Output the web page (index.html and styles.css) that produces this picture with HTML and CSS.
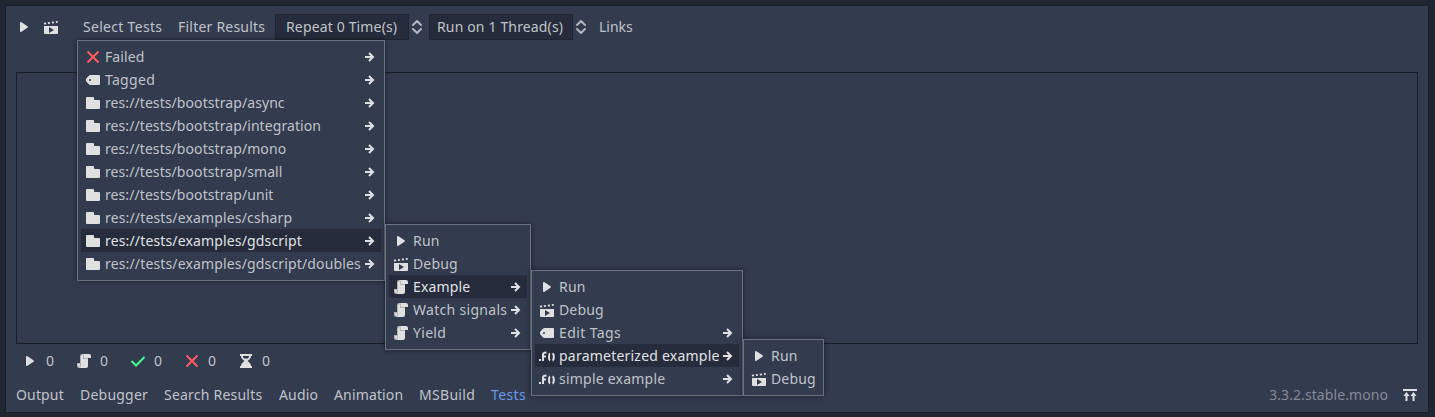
FILE: index.html
```html
<!DOCTYPE html>
<html lang="en">
<head>
<meta charset="utf-8">
<title>Tests</title>
<link rel="stylesheet" href="styles.css">
</head>
<body>
<svg class="defs" aria-hidden="true">
  <symbol id="play" viewBox="0 0 16 16"><path d="M4 4v8a1 1 0 0 0 1.500.8l6-4a1 1 0 0 0 0-1.600l-6-4A1 1 0 0 0 4 4z"/></symbol>
  <symbol id="clap" viewBox="0 0 16 16"><path fill-rule="evenodd" d="M1 7h14v7q0 1-1 1H2q-1 0-1-1zM6 8v6l5-3z"/><path d="M.8 3.700l2-.3.6 1.800-2.400.4zM4.600 3.200l2-.3.6 1.800-2 .3zM8.600 2.700l2-.3.6 1.800-2 .3zM12.600 2.200l2.200-.3v1.800l-1.600.3z"/></symbol>
  <symbol id="script" viewBox="0 0 16 16"><path d="M6 1v1a1 1 0 0 0-1 1v10H4v-2H2v2a1 1 0 0 0 1 1v1h7a2 2 0 0 0 2-2V5h3V3a2 2 0 0 0-2-2z"/><path fill="#b4b4b4" d="M6 1a2 2 0 0 0-2 2v7H1v3a2 2 0 0 0 4 0V3a1 1 0 0 1 2 0v3h5V5H8V3a2 2 0 0 0-2-2zM2 11h2v2a1 1 0 0 1-2 0z"/></symbol>
  <symbol id="folder" viewBox="0 0 16 16"><path d="M2 2a1 1 0 0 0-1 1v10a1 1 0 0 0 1 1h12a1 1 0 0 0 1-1V6a1 1 0 0 0-1-1h-4a1 1 0 0 1-1-1V3a1 1 0 0 0-1-1z"/></symbol>
  <symbol id="tag" viewBox="0 0 16 16"><path fill-rule="evenodd" d="M5.500 3H14q1 0 1 1v8q0 1-1 1H5.500Q4 13 1 9V7Q4 3 5.500 3zM5 7a1 1 0 1 0 0 2 1 1 0 0 0 0-2z"/></symbol>
  <symbol id="cross" viewBox="0 0 16 16"><path fill="none" stroke="#ff5d5d" stroke-width="2" d="M2.500 2.500l11 11M13.500 2.500l-11 11"/></symbol>
  <symbol id="check" viewBox="0 0 16 16"><path fill="none" stroke="#45ff8b" stroke-width="2" d="M1.500 8l4.500 4.500L14.500 4"/></symbol>
  <symbol id="glass" viewBox="0 0 16 16"><path fill-rule="evenodd" d="M2 1h12v2h-1c0 2-1 3-3.500 5 2.500 2 3.500 3 3.500 5h1v2H2v-2h1c0-2 1-3 3.500-5C4 6 3 5 3 3H2zM5 3c0 1 .5 2 1 2.500h4c.5-.5 1-1.500 1-2.500z"/></symbol>
  <symbol id="func" viewBox="0 0 16 16"><path d="M0 11h2v2H0z"/><path fill="none" stroke="#e0e0e0" stroke-width="2" d="M4 13V6.500Q4 4.500 7.500 4.500M3 8.500h4M11 5.500Q10 6 10 9t1 3.500M13.500 5.500Q14.800 6 14.800 9t-1.300 3.500"/></symbol>
  <symbol id="arrow" viewBox="0 0 10 10"><path fill="none" stroke="#e0e0e0" stroke-width="2" d="M0 5h8M4 1l4 4-4 4"/></symbol>
  <symbol id="updown" viewBox="0 0 12 16"><path fill="none" stroke="#b4b7bd" stroke-width="2" stroke-linecap="round" stroke-linejoin="round" d="M2 6l4-4 4 4M2 10l4 4 4-4"/></symbol>
  <symbol id="expand" viewBox="0 0 16 16"><path d="M1 2h14v2H1zM4.500 5l3 4h-2v5h-2V9h-2zM11.500 5l3 4h-2v5h-2V9h-2z"/></symbol>
</svg>
<main class="panel">
  <header class="toolbar">
    <svg class="icon"><use href="#play"/></svg>
    <svg class="icon clap"><use href="#clap"/></svg>
    <span class="select ls-4">Select Tests</span>
    <span class="filter ls-3">Filter Results</span>
    <span class="spin repeat ls-2">Repeat 0 Time(s)</span>
    <svg class="updown"><use href="#updown"/></svg>
    <span class="spin threads ls-2">Run on 1 Thread(s)</span>
    <svg class="updown"><use href="#updown"/></svg>
    <span class="links">Links</span>
  </header>
  <section class="results"></section>
  <div class="counts">
    <span><svg class="icon"><use href="#play"/></svg>0</span>
    <span><svg class="icon"><use href="#script"/></svg>0</span>
    <span><svg class="icon"><use href="#check"/></svg>0</span>
    <span><svg class="icon"><use href="#cross"/></svg>0</span>
    <span><svg class="icon"><use href="#glass"/></svg>0</span>
  </div>
  <footer class="tabs">
    <span class="output ls-2">Output</span><span class="debugger ls-3">Debugger</span><span class="search ls-3">Search Results</span><span class="audio ls-2">Audio</span><span class="animation ls-2">Animation</span><span class="msbuild ls-4">MSBuild</span><span class="active ls-5">Tests</span>
    <span class="version ls-1">3.3.2.stable.mono</span>
    <svg class="icon"><use href="#expand"/></svg>
  </footer>
</main>

<div class="menu menu-root">
  <div class="row"><svg class="icon"><use href="#cross"/></svg><span class="ls-1">Failed</span><svg class="arrow"><use href="#arrow"/></svg></div>
  <div class="row"><svg class="icon"><use href="#tag"/></svg><span class="ls-4">Tagged</span><svg class="arrow"><use href="#arrow"/></svg></div>
  <div class="row"><svg class="icon"><use href="#folder"/></svg><span class="ls-1">res://tests/bootstrap/async</span><svg class="arrow"><use href="#arrow"/></svg></div>
  <div class="row"><svg class="icon"><use href="#folder"/></svg><span class="ls-1">res://tests/bootstrap/integration</span><svg class="arrow"><use href="#arrow"/></svg></div>
  <div class="row"><svg class="icon"><use href="#folder"/></svg><span class="ls-1">res://tests/bootstrap/mono</span><svg class="arrow"><use href="#arrow"/></svg></div>
  <div class="row"><svg class="icon"><use href="#folder"/></svg><span class="ls-1">res://tests/bootstrap/small</span><svg class="arrow"><use href="#arrow"/></svg></div>
  <div class="row"><svg class="icon"><use href="#folder"/></svg><span class="ls-1">res://tests/bootstrap/unit</span><svg class="arrow"><use href="#arrow"/></svg></div>
  <div class="row"><svg class="icon"><use href="#folder"/></svg><span class="ls-2">res://tests/examples/csharp</span><svg class="arrow"><use href="#arrow"/></svg></div>
  <div class="row hover"><svg class="icon"><use href="#folder"/></svg><span class="ls-2">res://tests/examples/gdscript</span><svg class="arrow"><use href="#arrow"/></svg></div>
  <div class="row"><svg class="icon"><use href="#folder"/></svg><span class="ls-2">res://tests/examples/gdscript/doubles</span><svg class="arrow"><use href="#arrow"/></svg></div>
</div>
<div class="menu menu-dir">
  <div class="row"><svg class="icon"><use href="#play"/></svg><span class="ls-3">Run</span></div>
  <div class="row"><svg class="icon"><use href="#clap"/></svg><span class="ls-2">Debug</span></div>
  <div class="row hover"><svg class="icon"><use href="#script"/></svg><span class="ls-2">Example</span><svg class="arrow"><use href="#arrow"/></svg></div>
  <div class="row"><svg class="icon"><use href="#script"/></svg><span class="ls-4">Watch signals</span><svg class="arrow"><use href="#arrow"/></svg></div>
  <div class="row"><svg class="icon"><use href="#script"/></svg><span class="ls-4">Yield</span><svg class="arrow"><use href="#arrow"/></svg></div>
</div>
<div class="menu menu-script">
  <div class="row"><svg class="icon"><use href="#play"/></svg><span class="ls-3">Run</span></div>
  <div class="row"><svg class="icon"><use href="#clap"/></svg><span class="ls-2">Debug</span></div>
  <div class="row"><svg class="icon"><use href="#tag"/></svg><span class="ls-5">Edit Tags</span><svg class="arrow"><use href="#arrow"/></svg></div>
  <div class="row hover"><svg class="icon"><use href="#func"/></svg><span class="ls-3">parameterized example</span><svg class="arrow"><use href="#arrow"/></svg></div>
  <div class="row"><svg class="icon"><use href="#func"/></svg><span class="ls-3">simple example</span><svg class="arrow"><use href="#arrow"/></svg></div>
</div>
<div class="menu menu-method">
  <div class="row"><svg class="icon"><use href="#play"/></svg><span class="ls-3">Run</span></div>
  <div class="row"><svg class="icon"><use href="#clap"/></svg><span class="ls-2">Debug</span></div>
</div>
</body>
</html>
```

FILE: styles.css
```css
* { box-sizing: border-box; }
html, body { height: 100%; }
body {
  margin: 0;
  padding: 5px 6px 4px 5px;
  overflow: hidden;
  background: #202531;
  color: #c0c3c9;
  font: 14px/21px "Noto Sans", sans-serif;
  white-space: nowrap;
}
.defs { display: none; }
.icon { width: 16px; height: 16px; flex: none; fill: #e0e0e0; overflow: visible; }

/* Label tracking steps */
.ls-1 { letter-spacing: .08px; }
.ls-2 { letter-spacing: .15px; }
.ls-3 { letter-spacing: .22px; }
.ls-4 { letter-spacing: .3px; }
.ls-5 { letter-spacing: .4px; }

.panel {
  display: flex;
  flex-direction: column;
  height: 408px;
  border: 1px solid #191e28;
  background: #333b4f;
}
.toolbar { display: flex; align-items: center; height: 26px; margin-top: 8px; padding-left: 10px; }
.toolbar > span { padding-bottom: 2px; }
.clap { margin-left: 11px; }
.select { width: 79px; margin-left: 24px; }
.filter { width: 87px; margin-left: 16px; }
.spin { height: 26px; line-height: 24px; border: 1px solid #202531; background: #262c3b; }
.toolbar > .spin { padding-bottom: 0; line-height: 23px; }
.repeat { width: 134px; margin-left: 10px; padding-left: 10px; }
.threads { width: 144px; margin-left: 6px; padding-left: 7px; }
.updown { width: 12px; height: 16px; margin-left: 2px; }
.links { margin-left: 12px; }

.results { height: 272px; margin: 32px 10px 0; border: 1px solid #191e28; }
.counts { display: flex; height: 34px; padding-left: 16px; line-height: 19px; }
.counts span { display: flex; align-items: center; gap: 8px; width: 54px; padding-bottom: 1px; }
.tabs { display: flex; align-items: center; height: 34px; padding: 0 10px; }
.tabs span { flex: none; padding-bottom: 2px; }
.output { width: 64px; }
.debugger { width: 84px; }
.search { width: 115px; }
.audio { width: 55px; }
.animation { width: 85px; }
.msbuild { width: 72px; }
.active { color: #699ce8; }
.version { margin-left: auto; margin-right: 14px; color: #868b96; }

.menu {
  position: absolute;
  padding: 4px 3px;
  border: 1px solid #6b7280;
  background: #333b4f;
  box-shadow: 0 0 5px rgba(0, 0, 0, .5);
}
.menu-root { left: 77px; top: 40px; width: 308px; height: 241px; }
.menu-dir { left: 385px; top: 224px; width: 146px; height: 126px; }
.menu-script { left: 531px; top: 270px; width: 212px; height: 126px; }
.menu-method { left: 743px; top: 339px; width: 81px; height: 57px; }
.row { display: flex; align-items: center; height: 23px; padding: 0 6px 0 4px; }
.row span { margin-left: 4px; }
.row.hover { background: #262c3b; color: #e0e1e4; }
.arrow { width: 10px; height: 10px; flex: none; margin-left: auto; }
```
